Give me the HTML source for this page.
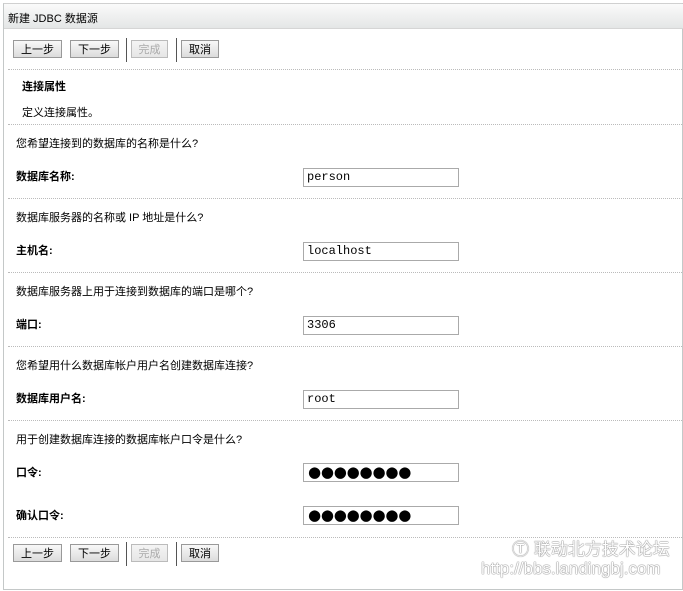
<!DOCTYPE html>
<html><head><meta charset="utf-8"><style>
body{margin:0;width:683px;height:591px;background:#fff;position:relative;overflow:hidden;font-family:"Liberation Sans","Noto Sans CJK SC",sans-serif;font-size:11px;color:#000}
.a{position:absolute}
.frame{left:3px;top:3px;width:678px;height:585px;border:1px solid #c4c8c8;border-top:1px solid #d0d0d0}
.hdr{left:4px;top:4px;width:679px;height:24px;background:linear-gradient(#fafafa,#e4e6e6);border-bottom:1px solid #d5d5d5}
.hdr span{position:absolute;left:4px;top:6px;font-size:11px}
.btn{height:18px;border:1px solid #999;background:linear-gradient(#f8f8f8,#dcdcdc);font-size:11px;line-height:18px;text-align:center;box-sizing:border-box;color:#000}
.dis{color:#aaa;border-color:#bbb;background:linear-gradient(#f4f4f4,#e6e6e6)}
.sep{width:1px;height:24px;background:#555}
.dl{left:8px;width:674px;border-top:1px dotted #bbb;height:0}
.q{left:16px}
.lb{left:16px;font-weight:bold}
.in{left:303px;width:156px;height:19px;border:1px solid #aaa;box-sizing:border-box;font-family:"Liberation Mono",monospace;font-size:12px;line-height:17px;padding-left:3px}
.pw{font-size:15px;letter-spacing:-0.2px;font-family:"DejaVu Sans",sans-serif;line-height:16px;padding-left:4px}
.wm{color:#fff;text-shadow:0 0 1px #666,0 0 1px #666;font-size:17px}
</style></head><body>
<div class="a frame"></div>
<div class="a hdr"><span>新建 JDBC 数据源</span></div>

<div class="a btn" style="left:13px;top:40px;width:49px">上一步</div>
<div class="a btn" style="left:70px;top:40px;width:49px">下一步</div>
<div class="a sep" style="left:126px;top:38px"></div>
<div class="a btn dis" style="left:131px;top:40px;width:37px">完成</div>
<div class="a sep" style="left:176px;top:38px"></div>
<div class="a btn" style="left:181px;top:40px;width:38px">取消</div>
<div class="a dl" style="top:69px"></div>

<div class="a" style="left:22px;top:78px;font-weight:bold">连接属性</div>
<div class="a" style="left:22px;top:104px">定义连接属性。</div>
<div class="a dl" style="top:124px"></div>

<div class="a q" style="top:135px">您希望连接到的数据库的名称是什么?</div>
<div class="a lb" style="top:168px">数据库名称:</div>
<div class="a in" style="top:168px">person</div>
<div class="a dl" style="top:198px"></div>

<div class="a q" style="top:209px">数据库服务器的名称或 IP 地址是什么?</div>
<div class="a lb" style="top:242px">主机名:</div>
<div class="a in" style="top:242px">localhost</div>
<div class="a dl" style="top:272px"></div>

<div class="a q" style="top:283px">数据库服务器上用于连接到数据库的端口是哪个?</div>
<div class="a lb" style="top:316px">端口:</div>
<div class="a in" style="top:316px">3306</div>
<div class="a dl" style="top:346px"></div>

<div class="a q" style="top:357px">您希望用什么数据库帐户用户名创建数据库连接?</div>
<div class="a lb" style="top:390px">数据库用户名:</div>
<div class="a in" style="top:390px">root</div>
<div class="a dl" style="top:420px"></div>

<div class="a q" style="top:431px">用于创建数据库连接的数据库帐户口令是什么?</div>
<div class="a lb" style="top:464px">口令:</div>
<div class="a in pw" style="top:463px">●●●●●●●●</div>
<div class="a lb" style="top:507px">确认口令:</div>
<div class="a in pw" style="top:506px">●●●●●●●●</div>
<div class="a dl" style="top:537px"></div>

<div class="a btn" style="left:13px;top:544px;width:49px">上一步</div>
<div class="a btn" style="left:70px;top:544px;width:49px">下一步</div>
<div class="a sep" style="left:126px;top:542px"></div>
<div class="a btn dis" style="left:131px;top:544px;width:37px">完成</div>
<div class="a sep" style="left:176px;top:542px"></div>
<div class="a btn" style="left:181px;top:544px;width:38px">取消</div>

<div class="a wm" style="left:512px;top:535px">Ⓣ 联动北方技术论坛</div>
<div class="a wm" style="left:481px;top:559px">http://bbs.landingbj.com</div>
</body></html>
